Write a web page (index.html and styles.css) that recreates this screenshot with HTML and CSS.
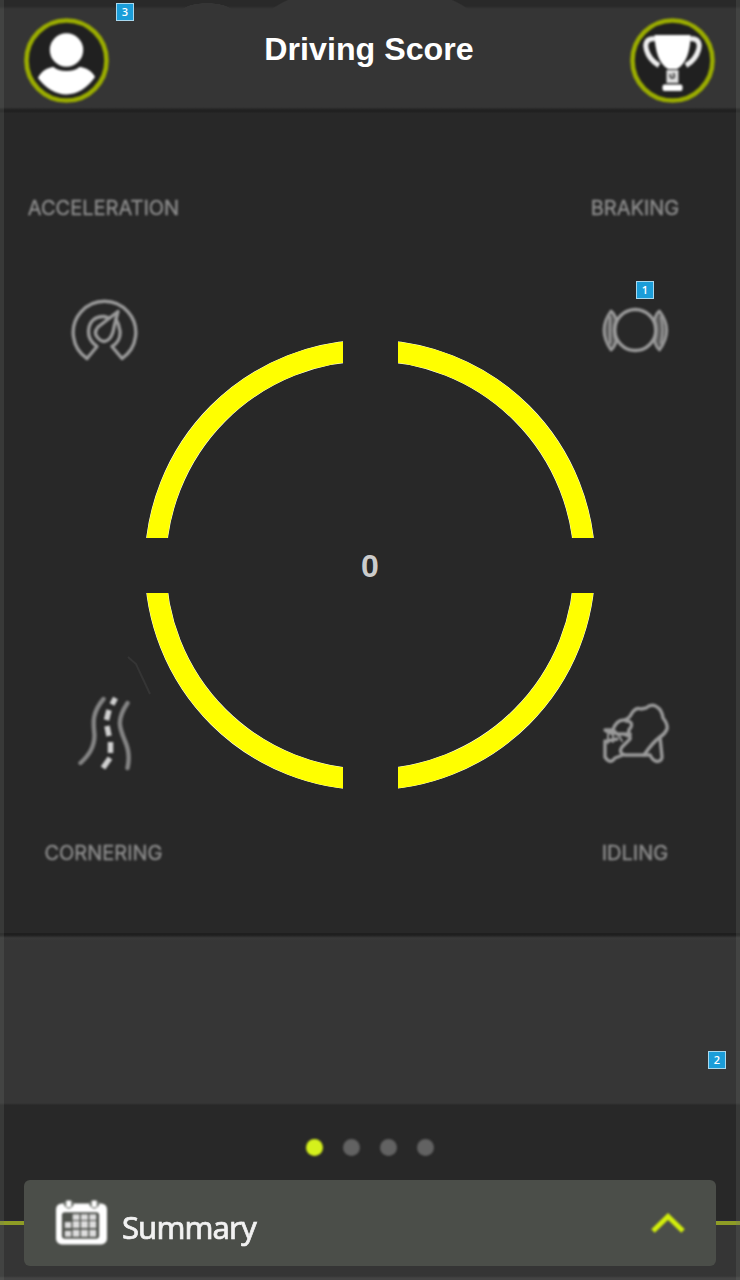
FILE: index.html
```html
<!DOCTYPE html>
<html lang="en">
<head>
<meta charset="utf-8">
<title>Driving Score</title>
<link rel="stylesheet" href="styles.css">
</head>
<body>
<div class="app">
  <header class="header">
    <svg class="header-icon soft" width="88" height="88" viewBox="0 0 88 88">
      <circle class="badge-ring" cx="43.500" cy="44.500" r="40"/>
      <circle class="solid" cx="43.500" cy="34" r="16.700"/>
      <path class="solid" d="M15 62C18 55 25 51.500 30.500 51Q35 55 43.500 55Q52 55 56.500 51C63 51.500 69 55 72 61Q60 78 43.500 78.500Q27 78 15 62Z"/>
    </svg>
    <h1 class="title">Driving Score</h1>
    <svg class="header-icon soft" width="88" height="88" viewBox="0 0 88 88">
      <circle class="badge-ring" cx="43.500" cy="44.500" r="40"/>
      <path class="solid" d="M25.500 19H61.500C61.500 35 57 48 48 53H39C30 48 26 35 25.500 19Z"/>
      <path class="handle" d="M26 23C18 22 15.500 27 17.500 34C19.500 41 24 46 30 49.500M61 23C69 22 71.500 27 69.500 34C67.500 41 63 46 57 49.500"/>
      <path class="cup-stem" d="M37.500 54H49.500V67H37.500Z"/>
      <path class="cup-mark" d="M41.500 58Q40.500 62 43.500 62Q46.500 62 44.500 57"/>
      <rect class="solid" x="33.500" y="68.500" width="20" height="6.500" rx="2"/>
    </svg>
    <span class="marker marker-3">3</span>
  </header>

  <main class="board">
    <section class="metric">
      <h2 class="label label-acceleration">ACCELERATION</h2>
      <svg class="icon soft" width="76" height="76" viewBox="0 0 76 76">
        <path d="M21 67.500A31.300 31.300 0 1 1 56 67.500L46 55.500Q55 50 54 40Q53 33 50 28"/>
        <path d="M21 67.500L31 55.500Q22 49 22.500 40C23 30 30 25 38 25.500L43 27"/>
        <path d="M52 20.500L32 36Q27 42 32 47Q38 54 44 47Q47 43 48 36Z"/>
      </svg>
    </section>
    <section class="metric metric-right">
      <h2 class="label label-braking">BRAKING</h2>
      <svg class="icon soft" width="76" height="76" viewBox="0 0 76 76">
        <circle cx="38.300" cy="39" r="20.500"/>
        <path class="pad" d="M14 20Q0 39 14 59Q17 57 19.500 50Q15 39 19.500 29Q17 22 14 20ZM62.500 20Q77 39 62.500 59Q59 56 57.500 50Q61 39 57.500 29Q59 22 62.500 20Z"/>
        <path class="fine" d="M13 26V52M64 26Q67 39 64 52"/>
      </svg>
      <span class="marker marker-1">1</span>
    </section>
    <div class="gauge">
      <svg class="ring" width="452" height="452" viewBox="0 0 452 452">
        <clipPath id="quarters"><path d="M0 0H199V198H0ZM254 0H452V198H254ZM0 253H199V452H0ZM254 253H452V452H254Z"/></clipPath>
        <g clip-path="url(#quarters)">
          <circle class="ring-edge" cx="226" cy="225" r="214.600"/>
          <circle class="ring-fill" cx="226" cy="225" r="214.600"/>
        </g>
      </svg>
      <output class="score">0</output>
    </div>
    <section class="metric metric-low">
      <svg class="icon soft" width="76" height="80" viewBox="0 0 76 80">
        <path class="road" d="M37.500 8C25 23 27.500 33 28.500 44C28.500 57 22 65 14.500 72M61.500 12C50 29 53.500 37 59 50C63.500 60 63.500 68 61.500 77"/>
        <path class="dash" d="M49.500 7L46 13.500M43 19L40.500 29M41 35L43 45M44.500 51L44.500 62M44 67L37 77"/>
      </svg>
      <h2 class="label label-cornering">CORNERING</h2>
    </section>
    <section class="metric metric-right metric-low">
      <svg class="icon soft" width="76" height="80" viewBox="0 0 76 80">
        <path d="M16 39Q19 29 27 29Q32 28 35 22Q39 16 44 18L49 17Q55 12 60 16Q65 19 66 27Q71 33 70 38Q68 43 63 46Q56 51 47 64H28Q21 62 25 56L33 48Q34 45 29 44M29 30Q36 30 34 36Q30 40 33 44"/>
        <path d="M8 39H16L20 43H33M9 40L16 43M10 50L20 48M8 50V66Q13 74 18 67L26 64M47 64H53Q56 70 60 70.500Q65 70 65 66L63 46"/>
        <path class="fine" d="M11 43V52M16 42V51M21 43L25 50"/>
      </svg>
      <h2 class="label label-idling">IDLING</h2>
    </section>
    <svg class="streak" width="28" height="40" viewBox="0 0 28 40"><path d="M3 1L11 8L25 38"/></svg>
  </main>

  <section class="panel"><span class="marker marker-2">2</span></section>

  <footer class="footer">
    <nav class="pages soft"><i class="dot dot-on"></i><i class="dot"></i><i class="dot"></i><i class="dot"></i></nav>
    <div class="drawer">
      <i class="rail"></i>
      <button class="summary">
        <svg class="calendar soft" width="51" height="46" viewBox="0 0 52 46">
          <rect class="solid" x="0" y="3" width="52" height="42" rx="6"/>
          <path class="calendar-shade" d="M8 1V5Q13 12 18 5V1M34 1V5Q39 12 44 5V1"/>
          <path class="calendar-pin" d="M13 0V7M39 0V7"/>
          <rect class="calendar-inset" x="6" y="12" width="38" height="27" rx="3"/>
          <path class="calendar-cells" d="M17 14H24V20H17ZM25.500 14H32.500V20H25.500ZM34 14H41V20H34ZM9 22H15.500V28H9ZM17 21H24V28H17ZM25.500 21H32.500V28H25.500ZM34 21H41V28H34ZM9 31H15.500V37H9ZM17 30H24V37H17ZM25.500 30H32.500V37H25.500ZM34 30H41V37H34Z"/>
        </svg>
        <span class="summary-text">Summary</span>
        <svg class="chevron soft" width="40" height="26" viewBox="0 0 40 26"><path d="M5 21L20 6.500L35 21"/></svg>
      </button>
      <i class="rail"></i>
    </div>
  </footer>
</div>
</body>
</html>
```
FILE: styles.css
```css
* { box-sizing: border-box; }
body { margin: 0; background: #282828; }
.app {
  position: relative;
  width: 740px;
  height: 1280px;
  display: flex;
  flex-direction: column;
  overflow: hidden;
  background: #282828;
  font-family: "Liberation Sans", Arial, sans-serif;
}
/* Lighter frame along both sides of the screen */
.app::after {
  content: "";
  position: absolute;
  inset: 0;
  border: solid rgba(112, 118, 112, .22);
  border-width: 0 4px;
  filter: blur(.6px);
  pointer-events: none;
}
svg { display: block; flex: none; fill: none; }
.soft { filter: blur(.9px); }
.solid { fill: #fff; }
.header {
  position: relative;
  height: 113px;
  flex: none;
  display: flex;
  justify-content: space-between;
  padding: 16px 23px 0;
  background:
    radial-gradient(ellipse 26px 9px at 207px 12px, #353535 96%, transparent),
    radial-gradient(ellipse 112px 45px at 370px 30px, #353535 98%, transparent),
    linear-gradient(#292929 6px, #353535 9px, #353535 107px, #212121 110px, #212121 112px, #282828 113px);
}
.badge-ring { fill: #202020; stroke: #9bad00; stroke-width: 4.6; }
.handle { stroke: #eee; stroke-width: 5; }
.cup-stem { fill: #ddd; }
.cup-mark { stroke: #555; stroke-width: 2; }
.title { margin: 14px 2px 0 0; color: #fff; font-size: 32.200px; line-height: 38px; font-weight: 700; white-space: nowrap; }
.marker {
  position: absolute;
  width: 18px;
  height: 18px;
  border: 1px solid #a9d8ee;
  background: #1b9dd9;
  color: #fff;
  font: 600 11px/16px "Open Sans", sans-serif;
  text-align: center;
}
.marker-3 { left: 116px; top: 3px; }
.board {
  position: relative;
  height: 820px;
  flex: none;
  display: grid;
  grid-template-columns: 207px 1fr 210px;
  grid-template-rows: 410px 410px;
}
.metric {
  position: relative;
  grid-column: 1;
  grid-row: 1;
  display: flex;
  flex-direction: column;
  align-items: center;
  justify-content: space-between;
  padding: 83px 0 156px;
}
.metric-right { grid-column: 3; }
.metric-low { grid-row: 2; padding: 168px 0 68px; }
.label {
  margin: 0;
  color: #8b8b8b;
  font: 400 20px/24px Inter, sans-serif;
  white-space: nowrap;
  filter: blur(.9px);
  -webkit-text-stroke: .4px #8b8b8b;
}
.icon { stroke: #9a9a9a; stroke-width: 3.4; stroke-linejoin: round; stroke-linecap: round; }
.icon .fine { stroke-width: 2; }
.icon .pad { fill: #5c5c5c; stroke-width: 2.8; }
.icon .road { stroke-width: 4.4; stroke: #858585; }
.icon .dash { stroke-width: 5.5; stroke: #d0d0d0; stroke-linecap: butt; }
.marker-1 { left: 106px; top: 168px; }
.gauge {
  grid-column: 1 / -1;
  grid-row: 1 / -1;
  display: grid;
  justify-content: center;
  padding-top: 227px;
  align-items: start;
}
.ring, .score { grid-area: 1 / 1; }
.ring-edge { stroke: #fff; stroke-width: 21.6; }
.ring-fill { stroke: #ff0; stroke-width: 20.8; }
.score { color: #ccc; font-size: 32px; line-height: 36px; font-weight: 700; text-align: center; padding-top: 208px; }
.streak { position: absolute; left: 125px; top: 543px; stroke: #353535; stroke-width: 2; filter: blur(.6px); }
.panel {
  position: relative;
  height: 172px;
  flex: none;
  background: linear-gradient(#1f1f1f 2px, #393939 5px, #363636 8px, #363636 170px, #292929 172px);
}
.marker-2 { right: 14px; top: 118px; }
.footer {
  height: 175px;
  flex: none;
  display: flex;
  flex-direction: column;
  background: linear-gradient(#282828 117px, #353535 119px, #353535 171px, #444 173px);
}
.pages { display: flex; justify-content: center; gap: 20px; padding: 34px 1px 24px 0; }
.dot { width: 17px; height: 17px; border-radius: 50%; background: #626262; }
.dot-on { background: #d5f11c; }
.drawer { display: flex; align-items: center; }
.rail { width: 24px; height: 5px; margin-bottom: 1px; background: #8e9c25; border-top: 1px solid #28243a; }
.summary {
  flex: 1;
  height: 86px;
  display: flex;
  align-items: center;
  padding: 0 28px 0 32px;
  border: 0;
  border-radius: 6px;
  background: #4b4e49;
  color: #f2f2f2;
  text-align: left;
}
.calendar-shade { fill: #70746e; }
.calendar-pin { stroke: #fff; stroke-width: 5; }
.calendar-inset { fill: #50534e; }
.calendar-cells { fill: #ddd; }
.summary-text { flex: 1; margin: 7px 0 0 15px; font: 400 31px/40px "Noto Sans", sans-serif; letter-spacing: -.9px; filter: blur(.7px); -webkit-text-stroke: .7px #f2f2f2; }
.chevron { stroke: #d3ef0b; stroke-width: 5; }
```
